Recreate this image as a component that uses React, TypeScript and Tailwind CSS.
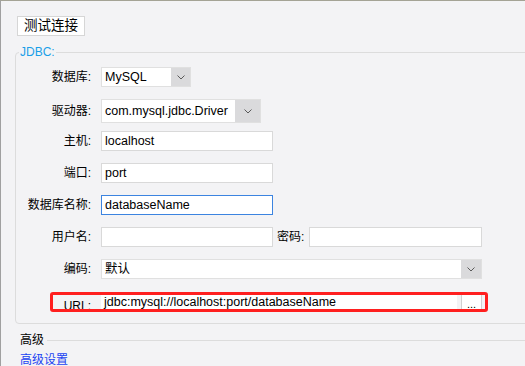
import type { ReactNode } from "react";

const font = "font-['Liberation_Sans','Noto_Sans_CJK_SC',sans-serif]";

function Label({ children, className = "" }: { children: ReactNode; className?: string }) {
  return (
    <div className={`w-[75px] shrink-0 text-right text-[12px] leading-none text-black ${className}`}>
      {children}
    </div>
  );
}

function Chevron() {
  return (
    <svg width="8" height="5" viewBox="0 0 8 5" fill="none">
      <polyline points="0.5,0.5 4,4 7.5,0.5" stroke="#5a5a5a" strokeWidth="1" />
    </svg>
  );
}

function TextBox({ value, w, focused = false }: { value?: string; w: string; focused?: boolean }) {
  return (
    <div
      className={`${w} h-[20px] flex items-center bg-white border pl-[3px] text-[12.5px] text-black ${
        focused ? "border-[#3c84e0]" : "border-[#d9d9d9]"
      }`}
    >
      {value}
    </div>
  );
}

function Select({ value, w, h, btn }: { value: string; w: string; h: string; btn: string }) {
  return (
    <div className={`${w} ${h} flex bg-white border border-[#e0e0e0] text-[12.5px] text-black`}>
      <div className="flex-1 flex items-center pl-[3px]">{value}</div>
      <div className={`${btn} flex items-center justify-center bg-[#dadadc]`}>
        <Chevron />
      </div>
    </div>
  );
}

export default function App() {
  return (
    <div
      className={`${font} w-[525px] h-[366px] overflow-hidden bg-[#f3f3f5] border-t border-t-[#a4a395] border-l border-l-[#a0a0a0]`}
    >
      {/* toolbar */}
      <div className="ml-[16px] mt-[15px] w-[68px] h-[20px] flex items-center justify-center bg-white border border-[#d6d6d6] text-[13.5px] text-black">
        测试连接
      </div>

      {/* JDBC group */}
      <fieldset className="ml-[14px] mt-[9px] w-[560px] border border-[#dcdcdc] rounded-[4px] pb-[11px]">
        <legend className="ml-[3px] px-px text-[12px] leading-[15px] text-[#1a9fe8]">JDBC:</legend>

        <div className="mt-[7px] h-[20px] flex items-center">
          <Label>数据库:</Label>
          <div className="ml-[10px]">
            <Select value="MySQL" w="w-[90px]" h="h-[20px]" btn="w-[19px]" />
          </div>
        </div>

        <div className="mt-[12px] h-[24px] flex items-center">
          <Label>驱动器:</Label>
          <div className="ml-[10px]">
            <Select value="com.mysql.jdbc.Driver" w="w-[160px]" h="h-[24px]" btn="w-[25px]" />
          </div>
        </div>

        <div className="mt-[8px] h-[20px] flex items-center">
          <Label>主机:</Label>
          <div className="ml-[10px]">
            <TextBox value="localhost" w="w-[172px]" />
          </div>
        </div>

        <div className="mt-[12px] h-[20px] flex items-center">
          <Label>端口:</Label>
          <div className="ml-[10px]">
            <TextBox value="port" w="w-[172px]" />
          </div>
        </div>

        <div className="mt-[12px] h-[20px] flex items-center">
          <Label>数据库名称:</Label>
          <div className="ml-[10px]">
            <TextBox value="databaseName" w="w-[172px]" focused />
          </div>
        </div>

        <div className="mt-[12px] h-[20px] flex items-center">
          <Label>用户名:</Label>
          <div className="ml-[10px]">
            <TextBox w="w-[172px]" />
          </div>
          <div className="ml-[4px] text-[12px] leading-none text-black">密码:</div>
          <div className="ml-[5px]">
            <TextBox w="w-[173px]" />
          </div>
        </div>

        <div className="mt-[12px] h-[20px] flex items-center">
          <Label>编码:</Label>
          <div className="ml-[10px]">
            <Select value="默认" w="w-[381px]" h="h-[20px]" btn="w-[20px]" />
          </div>
        </div>

        <div className="relative mt-[13px] h-[20px] flex items-center">
          <Label className="pt-[7px]">URL:</Label>
          <div className="ml-[10px] w-[356px] h-[18px] flex items-center bg-white pl-[3px] text-[12.5px] text-black">
            jdbc:mysql://localhost:port/databaseName
          </div>
          <div className="ml-[4px] w-[21px] h-[18px] flex items-end justify-center bg-white border-x border-[#d0d0d0] text-[11px] leading-[14px] text-black">
            ...
          </div>
          {/* highlight annotation */}
          <div className="absolute left-[34px] top-0 w-[438px] h-[20px] border-[3px] border-[#ff1f1f] rounded-[3px]" />
        </div>
      </fieldset>

      {/* advanced */}
      <div className="ml-[19px] mt-[9px] flex items-center">
        <div className="text-[12px] leading-[15px] text-black">高级</div>
        <div className="ml-[3px] flex-1 h-px bg-[#dcdcdc]" />
      </div>
      <div className="ml-[19px] mt-[5px] text-[12px] leading-[15px] text-[#1a44f2]">高级设置</div>
    </div>
  );
}
